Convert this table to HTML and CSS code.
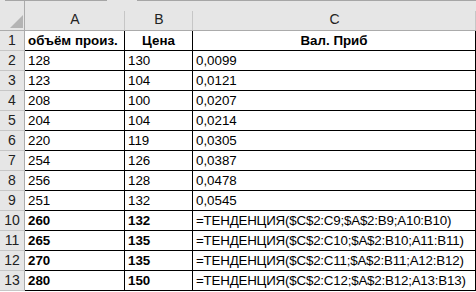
FILE: index.html
```html
<!DOCTYPE html>
<html>
<head>
<meta charset="utf-8">
<link rel="stylesheet" href="styles.css">
</head>
<body>
<div class="topline">
  <span class="seg gap1"></span><span class="seg line1"></span><span class="seg gap2"></span><span class="seg line2"></span>
</div>
<div class="sheet">
  <div class="corner"><span class="tri"></span></div>
  <div class="colh">A</div>
  <div class="colh">B</div>
  <div class="colh">C</div>

  <div class="rowh">1</div>
  <div class="cell bold">объём произ.</div>
  <div class="cell bold center">Цена</div>
  <div class="cell bold center">Вал. Приб</div>

  <div class="rowh">2</div><div class="cell">128</div><div class="cell">130</div><div class="cell">0,0099</div>
  <div class="rowh">3</div><div class="cell">123</div><div class="cell">104</div><div class="cell">0,0121</div>
  <div class="rowh">4</div><div class="cell">208</div><div class="cell">100</div><div class="cell">0,0207</div>
  <div class="rowh">5</div><div class="cell">204</div><div class="cell">104</div><div class="cell">0,0214</div>
  <div class="rowh">6</div><div class="cell">220</div><div class="cell">119</div><div class="cell">0,0305</div>
  <div class="rowh">7</div><div class="cell">254</div><div class="cell">126</div><div class="cell">0,0387</div>
  <div class="rowh">8</div><div class="cell">256</div><div class="cell">128</div><div class="cell">0,0478</div>
  <div class="rowh">9</div><div class="cell">251</div><div class="cell">132</div><div class="cell">0,0545</div>
  <div class="rowh">10</div><div class="cell bold">260</div><div class="cell bold">132</div><div class="cell formula">=ТЕНДЕНЦИЯ($C$2:C9;$A$2:B9;A10:B10)</div>
  <div class="rowh">11</div><div class="cell bold">265</div><div class="cell bold">135</div><div class="cell formula">=ТЕНДЕНЦИЯ($C$2:C10;$A$2:B10;A11:B11)</div>
  <div class="rowh">12</div><div class="cell bold">270</div><div class="cell bold">135</div><div class="cell formula">=ТЕНДЕНЦИЯ($C$2:C11;$A$2:B11;A12:B12)</div>
  <div class="rowh">13</div><div class="cell bold">280</div><div class="cell bold">150</div><div class="cell formula">=ТЕНДЕНЦИЯ($C$2:C12;$A$2:B12;A13:B13)</div>
</div>
</body>
</html>
```

FILE: styles.css
```css
* { box-sizing: border-box; }
html, body {
  margin: 0;
  padding: 0;
  background: #ffffff;
}
body {
  width: 476px;
  height: 292px;
  overflow: hidden;
  font-family: "Liberation Sans", Arial, sans-serif;
  font-size: 13.33px;
  color: #000;
}
.topline {
  display: flex;
  height: 1px;
  background: #e6e6e6;
}
.seg { display: block; height: 1px; }
.gap1 { width: 5px; }
.line1 { width: 102px; background: #a6a6a6; }
.gap2 { width: 30px; }
.line2 { flex: 1; background: #a6a6a6; }

.sheet {
  display: grid;
  grid-template-columns: 25px 100px 68px 283px;
  grid-template-rows: 30px repeat(13, 20px);
}
.corner {
  background: #e6e6e6;
  border-right: 1px solid #ababab;
  border-bottom: 1px solid #ababab;
  display: flex;
  align-items: flex-end;
  justify-content: flex-end;
  padding: 0 1px 2px 0;
}
.tri {
  display: block;
  width: 13px;
  height: 13px;
  background: #b4b4b4;
  clip-path: polygon(100% 0, 100% 100%, 0 100%);
}
.colh {
  background: linear-gradient(#c6c6c6, #c6c6c6) right bottom / 1px 19px no-repeat, #e6e6e6;
  border-bottom: 1px solid #ababab;
  display: flex;
  align-items: flex-end;
  justify-content: center;
  padding-bottom: 2px;
  color: #222;
  line-height: 17px;
  font-size: 14px;
}
.rowh {
  background: #e6e6e6;
  border-right: 1px solid #ababab;
  border-bottom: 1px solid #c6c6c6;
  display: flex;
  align-items: center;
  justify-content: center;
  color: #222;
  line-height: 19px;
  font-size: 14px;
}
.cell {
  border-right: 1px solid #000;
  border-bottom: 1px solid #000;
  display: flex;
  align-items: center;
  padding-left: 3px;
  line-height: 19px;
  white-space: nowrap;
  overflow: hidden;
}
.bold { font-weight: bold; }
.center { justify-content: center; padding-left: 0; }
.formula { letter-spacing: -0.2px; }
```
